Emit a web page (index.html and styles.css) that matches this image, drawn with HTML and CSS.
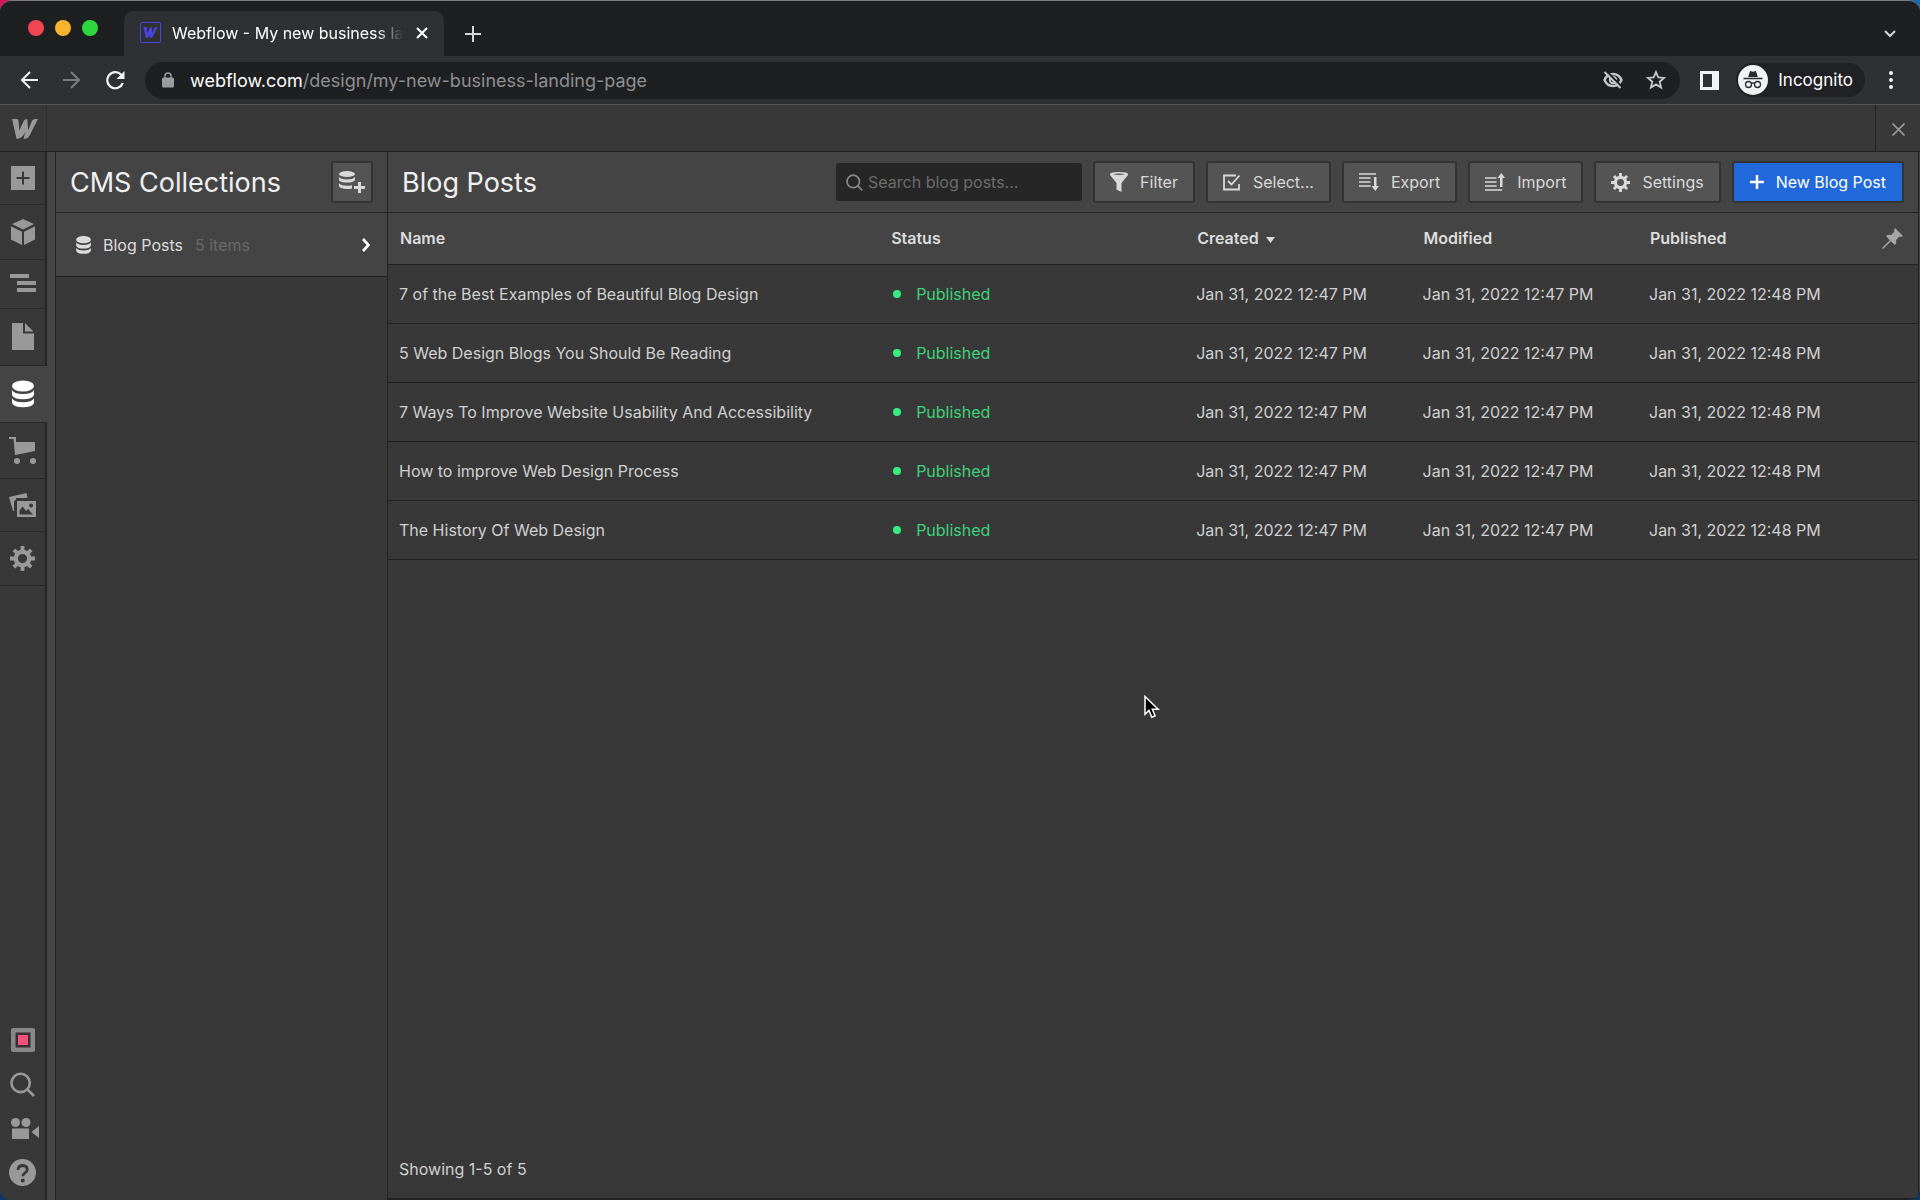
FILE: index.html
```html
<!DOCTYPE html>
<html lang="en">
    <head>
        <title>Webflow - My new business landing page</title>
        <meta charset="UTF-8">
        <link rel="stylesheet" href="styles.css">
    </head>
    <body>
        <!-- shared icons -->
        <svg class="sprite" width="0" height="0">
            <symbol id="database" viewBox="0 0 22 27">
                <ellipse cx="11" cy="5.500" rx="11" ry="5.500"/>
                <path d="M0 9.500q2 4 11 4t11-4v5q-2 4.300-11 4.300T0 14.500z"/>
                <path d="M0 17.800q2 4 11 4t11-4v4.600q-2 4.300-11 4.300T0 22.400z"/>
            </symbol>
            <symbol id="gear" viewBox="0 0 26 26">
                <circle cx="13" cy="13" r="7" fill="none" stroke="currentColor" stroke-width="4.500"/>
                <path d="M13 0v5M13 21v5M0 13h5M21 13h5M4 4l3.500 3.500M18.500 18.500L22 22M22 4l-3.500 3.500M7.500 18.500L4 22" fill="none" stroke="currentColor" stroke-width="4"/>
            </symbol>
            <symbol id="logo" viewBox="0 0 26 20">
                <path d="M26 0l-8.300 16.300c-1.200 2.500-3.300 3.700-6.200 3.700l1.900-7.700C11.500 17 8.900 19.800 4.600 20L.8 3.600C.4 1.200.2.600 0 0h4.700c1 0 1.700.700 1.800 2l.8 9.500 4.200-9.100C12.300.8 13.500 0 15.300 0l.9 11.500 3.300-8.700C20.300.900 21.500 0 23.300 0z"/>
            </symbol>
            <symbol id="search" viewBox="0 0 24 24">
                <path d="M17 17l6 6M19 10.500a8.800 8.800 0 1 1-17.600 0 8.800 8.800 0 0 1 17.600 0z" fill="none" stroke="currentColor" stroke-width="2.500"/>
            </symbol>
        </svg>

        <div class="window">
            <header class="tab-strip">
                <div class="lights">
                    <span class="light red"></span>
                    <span class="light yellow"></span>
                    <span class="light green"></span>
                </div>
                <div class="tab">
                    <span class="favicon"><svg width="15" height="11"><use href="#logo"/></svg></span>
                    <span class="tab-title">Webflow - My new business landing page</span>
                    <button class="icon-button" aria-label="Close tab">
                        <svg width="12" height="12" viewBox="0 0 12 12"><path d="M1 1l10 10M11 1L1 11" stroke="currentColor" stroke-width="2"/></svg>
                    </button>
                </div>
                <button class="icon-button new-tab" aria-label="New tab">
                    <svg width="16" height="16" viewBox="0 0 16 16"><path d="M8 0v16M0 8h16" stroke="currentColor" stroke-width="2"/></svg>
                </button>
                <button class="icon-button tab-menu" aria-label="Search tabs">
                    <svg width="12" height="8" viewBox="0 0 12 8"><path d="M1 1l5 5 5-5" fill="none" stroke="currentColor" stroke-width="2"/></svg>
                </button>
            </header>

            <nav class="toolbar">
                <div class="nav-buttons">
                    <button class="icon-button" aria-label="Back">
                        <svg width="18" height="18" viewBox="0 0 18 18"><path d="M18 9H2M10 1L2 9l8 8" fill="none" stroke="currentColor" stroke-width="2"/></svg>
                    </button>
                    <button class="icon-button dim" aria-label="Forward">
                        <svg width="18" height="18" viewBox="0 0 18 18"><path d="M0 9h16M8 1l8 8-8 8" fill="none" stroke="currentColor" stroke-width="2"/></svg>
                    </button>
                    <button class="icon-button" aria-label="Reload">
                        <svg width="19" height="19" viewBox="0 0 19 19"><path d="M16.800 12a8 8 0 1 1-1.600-8.200" fill="none" stroke="currentColor" stroke-width="2.200"/><path d="M18.500 0v8h-8z"/></svg>
                    </button>
                </div>
                <div class="address">
                    <svg width="12" height="16" viewBox="0 0 12 16"><path d="M3 7V4a3 3 0 0 1 6 0v3" fill="none" stroke="currentColor" stroke-width="1.500"/><rect y="5.500" width="12" height="10" rx="1.500"/></svg>
                    <a class="url" href="#"><span class="host">webflow.com</span>/design/my-new-business-landing-page</a>
                    <button class="icon-button" aria-label="Third-party cookies blocked">
                        <svg width="20" height="18" viewBox="0 0 20 18"><path d="M1.500 9C3.200 5 6.400 3 10 3s6.800 2 8.500 6c-1.700 4-4.900 6-8.500 6s-6.800-2-8.500-6z" fill="none" stroke="currentColor" stroke-width="2.400"/><circle cx="10" cy="9" r="3.200" fill="none" stroke="currentColor" stroke-width="2"/><path d="M3.500 0l15 15.500" stroke="#1e1f21" stroke-width="2"/><path d="M1.500 1l16 16" stroke="currentColor" stroke-width="2"/></svg>
                    </button>
                    <button class="icon-button" aria-label="Bookmark">
                        <svg width="20" height="20" viewBox="0 0 20 20"><path d="M10 2l2.300 5.400 5.900.5-4.500 3.800 1.400 5.800-5.100-3.100-5.100 3.100 1.400-5.800-4.500-3.800 5.900-.5z" fill="none" stroke="currentColor" stroke-width="1.800"/></svg>
                    </button>
                </div>
                <button class="icon-button" aria-label="Side panel">
                    <svg width="19" height="19" viewBox="0 0 19 19"><path d="M0 0h19v19H0zM3 3v13h9V3z" fill-rule="evenodd"/></svg>
                </button>
                <button class="incognito">
                    <svg width="30" height="30" viewBox="0 0 30 30"><circle cx="15" cy="15" r="15" fill="#f1f3f4"/><path d="M10.200 12l1.600-5.200q.4-1 1.400-.6l1.800.5 1.800-.5q1-.4 1.400.6l1.600 5.200zM5.500 12.800h19v1.400h-19z" fill="#2a2b2e"/><path d="M13.500 18.500q1.500-1 3 0" fill="none" stroke="#2a2b2e" stroke-width="1.300"/><circle cx="10.500" cy="19.500" r="3" fill="none" stroke="#2a2b2e" stroke-width="1.300"/><circle cx="19.500" cy="19.500" r="3" fill="none" stroke="#2a2b2e" stroke-width="1.300"/></svg>
                    Incognito
                </button>
                <button class="icon-button browser-menu" aria-label="Menu">
                    <svg width="4" height="18" viewBox="0 0 4 18"><circle cx="2" cy="2" r="2"/><circle cx="2" cy="9" r="2"/><circle cx="2" cy="16" r="2"/></svg>
                </button>
            </nav>

            <div class="designer-bar">
                <a class="brand" href="#" aria-label="Webflow"><svg width="26" height="20"><use href="#logo"/></svg></a>
                <button class="close-panel" aria-label="Close">
                    <svg width="13" height="13" viewBox="0 0 13 13"><path d="M.5.5l12 12M12.500.5l-12 12" stroke="currentColor" stroke-width="1.600"/></svg>
                </button>
            </div>

            <div class="workspace">
                <aside class="rail">
                    <button class="rail-item" aria-label="Add">
                        <svg width="24" height="24" viewBox="0 0 24 24"><path d="M0 0h24v24H0zM11 5.500V11H5.500v2H11v5.500h2V13h5.500v-2H13V5.500z" fill-rule="evenodd"/></svg>
                    </button>
                    <button class="rail-item" aria-label="Symbols">
                        <svg width="24" height="26" viewBox="0 0 24 26"><path d="M12 0l11 5-11 5.500L1 5zM0 7.200l11 5.500V26L0 20.500zM24 7.200l-11 5.500V26l11-5.500z"/></svg>
                    </button>
                    <button class="rail-item" aria-label="Navigator">
                        <svg width="26" height="20" viewBox="0 0 26 20"><path d="M0 0h19v4H0zM7 7h19v4H7zM7 14h19v4H7z"/></svg>
                    </button>
                    <button class="rail-item" aria-label="Pages">
                        <svg width="22" height="28" viewBox="0 0 22 28"><path d="M0 0h11v10.500h11V27H0zM13 0l8.500 8.500H13z"/></svg>
                    </button>
                    <button class="rail-item active" aria-label="CMS">
                        <svg width="22" height="28"><use href="#database"/></svg>
                    </button>
                    <button class="rail-item" aria-label="Ecommerce">
                        <svg width="27" height="27" viewBox="0 0 27 27"><path d="M0 0h7v5h19v9L6 18 4.500 2H0z"/><circle cx="8" cy="24" r="3"/><circle cx="24" cy="24" r="3"/></svg>
                    </button>
                    <button class="rail-item" aria-label="Assets">
                        <svg width="27" height="24" viewBox="0 0 27 24"><path d="M0 4L17.500 0l1 5H7v2q-2 0-2 2v9H4z"/><path d="M8 8h19v16H8zM10.500 21.500h13.500L19 16l-2 2-3.500-4.500-3 4zM22 10.500a2 2 0 1 0 .1 0z" fill-rule="evenodd"/></svg>
                    </button>
                    <button class="rail-item" aria-label="Settings">
                        <svg width="25" height="25"><use href="#gear"/></svg>
                    </button>
                    <div class="rail-bottom">
                        <button class="rail-tool" aria-label="Audit">
                            <svg width="24" height="24" viewBox="0 0 24 24"><rect width="24" height="24" rx="2" fill="#888"/><path d="M4.500 4.500h15v15h-15z" fill="#3a3033"/><path d="M7 7h10v10H7z" fill="#f0527c"/></svg>
                        </button>
                        <button class="rail-tool" aria-label="Search">
                            <svg width="25" height="25"><use href="#search"/></svg>
                        </button>
                        <button class="rail-tool video" aria-label="Video tutorials">
                            <svg width="28" height="21" viewBox="0 0 28 21"><circle cx="4.500" cy="4.500" r="4.500"/><circle cx="15" cy="4.500" r="4.500"/><path d="M1 10.500h17V21H1zM28 8v12l-7-5.500v-1z"/></svg>
                        </button>
                        <button class="rail-tool" aria-label="Help">
                            <svg width="27" height="27" viewBox="0 0 27 27"><circle cx="13.500" cy="13.500" r="13.500"/><path d="M9 10.800q.3-4.300 4.700-4.300 4.500.1 4.500 3.900 0 2.200-2.400 3.700-2 1.200-2 3.200" fill="none" stroke="#383838" stroke-width="2.800"/><circle cx="13.700" cy="21.400" r="2" fill="#383838"/></svg>
                        </button>
                    </div>
                </aside>

                <section class="collections">
                    <div class="panel-head">
                        <h1>CMS Collections</h1>
                        <button class="button square" aria-label="New collection">
                            <svg width="26" height="22" viewBox="0 0 26 22"><ellipse cx="8" cy="3" rx="8" ry="3"/><path d="M0 6q2 2.500 8 2.500T16 6v3.200q-2 2.300-8 2.300T0 9.200zM0 12.200q2 2.500 8 2.500 3 0 5-.5v3.200q-2 .5-5 .5-6 0-8-2.300zM19 11h3v4h4v3h-4v4h-3v-4h-4v-3h4z"/></svg>
                        </button>
                    </div>
                    <a class="collection" href="#">
                        <svg width="15" height="18"><use href="#database"/></svg>
                        <span>Blog Posts</span>
                        <span class="count">5 items</span>
                        <svg class="chevron" width="8" height="14" viewBox="0 0 8 14"><path d="M1 1l5.500 6L1 13" fill="none" stroke="currentColor" stroke-width="2.600"/></svg>
                    </a>
                </section>

                <main class="content">
                    <div class="panel-head">
                        <h2>Blog Posts</h2>
                        <div class="actions">
                            <label class="search">
                                <svg width="17" height="17"><use href="#search"/></svg>
                                <input type="search" placeholder="Search blog posts..." aria-label="Search blog posts">
                            </label>
                            <button class="button">
                                <svg width="18" height="20" viewBox="0 0 18 20"><path d="M0 2q0-2 9-2t9 2v1l-6.500 8v9l-5-2.500V11L0 3zM3 2.200q6 1.600 12 0-6-1.200-12 0z" fill-rule="evenodd"/></svg>
                                Filter
                            </button>
                            <button class="button">
                                <svg width="18" height="17" viewBox="0 0 18 17"><path d="M13 1.500H1v14h15V10M5 7l3.500 3.500 8-9" fill="none" stroke="currentColor" stroke-width="1.800"/></svg>
                                Select...
                            </button>
                            <button class="button">
                                <svg width="20" height="18" viewBox="0 0 20 18"><path d="M0 1h17M0 5h11.500M0 9h11.500M0 13h11.500" stroke="currentColor" stroke-width="1.700"/><path d="M15 4h2.500v9H20l-3.700 5-3.800-5H15z"/></svg>
                                Export
                            </button>
                            <button class="button">
                                <svg width="20" height="18" viewBox="0 0 20 18"><path d="M0 5h11.500M0 9h11.500M0 13h11.500M0 17h17" stroke="currentColor" stroke-width="1.700"/><path d="M15 14h2.500V5H20l-3.700-5-3.800 5H15z"/></svg>
                                Import
                            </button>
                            <button class="button">
                                <svg width="19" height="19"><use href="#gear"/></svg>
                                Settings
                            </button>
                            <button class="button primary">
                                <svg width="14" height="14" viewBox="0 0 14 14"><path d="M7 0v14M0 7h14" stroke="currentColor" stroke-width="2.500"/></svg>
                                New Blog Post
                            </button>
                        </div>
                    </div>
                    <table class="posts">
                        <colgroup>
                            <col class="col-name">
                            <col class="col-status">
                            <col class="col-date">
                            <col class="col-date">
                            <col class="col-date">
                            <col>
                        </colgroup>
                        <thead>
                            <tr>
                                <th>Name</th>
                                <th>Status</th>
                                <th>Created <svg class="sort" width="9" height="6" viewBox="0 0 9 6"><path d="M0 0h9L4.500 6z"/></svg></th>
                                <th>Modified</th>
                                <th>Published</th>
                                <th class="pin">
                                    <button class="icon-button" aria-label="Pin columns">
                                        <svg width="21" height="21" viewBox="0 0 21 21"><path d="M13 0l8 8-2 1-1.500-.5-3.500 3.500q1 3-1 5L8.800 13.200 1.500 20.500 0 21l.5-1.500 7.300-7.300L4 8q2-2 5-1l3.500-3.500L12 2z"/></svg>
                                    </button>
                                </th>
                            </tr>
                        </thead>
                        <tbody>
                            <tr>
                                <td>7 of the Best Examples of Beautiful Blog Design</td>
                                <td><span class="status">Published</span></td>
                                <td>Jan 31, 2022 12:47 PM</td>
                                <td>Jan 31, 2022 12:47 PM</td>
                                <td>Jan 31, 2022 12:48 PM</td>
                                <td></td>
                            </tr>
                            <tr>
                                <td>5 Web Design Blogs You Should Be Reading</td>
                                <td><span class="status">Published</span></td>
                                <td>Jan 31, 2022 12:47 PM</td>
                                <td>Jan 31, 2022 12:47 PM</td>
                                <td>Jan 31, 2022 12:48 PM</td>
                                <td></td>
                            </tr>
                            <tr>
                                <td>7 Ways To Improve Website Usability And Accessibility</td>
                                <td><span class="status">Published</span></td>
                                <td>Jan 31, 2022 12:47 PM</td>
                                <td>Jan 31, 2022 12:47 PM</td>
                                <td>Jan 31, 2022 12:48 PM</td>
                                <td></td>
                            </tr>
                            <tr>
                                <td>How to improve Web Design Process</td>
                                <td><span class="status">Published</span></td>
                                <td>Jan 31, 2022 12:47 PM</td>
                                <td>Jan 31, 2022 12:47 PM</td>
                                <td>Jan 31, 2022 12:48 PM</td>
                                <td></td>
                            </tr>
                            <tr>
                                <td>The History Of Web Design</td>
                                <td><span class="status">Published</span></td>
                                <td>Jan 31, 2022 12:47 PM</td>
                                <td>Jan 31, 2022 12:47 PM</td>
                                <td>Jan 31, 2022 12:48 PM</td>
                                <td></td>
                            </tr>
                        </tbody>
                    </table>
                    <p class="summary">Showing 1-5 of 5</p>
                </main>
            </div>
        </div>

        <svg class="cursor" width="16" height="24" viewBox="0 0 16 24"><path d="M1 1.500v17.700l4-3.800 2.800 6.800 3.300-1.400-2.800-6.500h5.900z" fill="#000" stroke="#fff" stroke-width="1.500"/></svg>
    </body>
</html>
```
FILE: styles.css
```css
* {
    margin: 0;
    padding: 0;
    box-sizing: border-box;
}
body {
    font-family: Inter, "Liberation Sans", sans-serif;
    font-size: 16px;
    color: #d0d0d0;
    background: radial-gradient(circle at 0 0, #d4145a 20px, transparent 40px),
        radial-gradient(circle at 100% 0, #1b6cab 20px, transparent 40px),
        #0d3763;
}
button, input {
    font: inherit;
    color: inherit;
    background: none;
    border: none;
}
a {
    color: inherit;
    text-decoration: none;
}
svg {
    display: block;
    flex-shrink: 0;
    fill: currentColor;
}
.sprite {
    position: absolute;
}
.window {
    display: flex;
    flex-direction: column;
    height: 100vh;
    overflow: hidden;
    border-top: 1px solid #7d7e80;
    border-radius: 12px;
    background-color: #383838;
}

/* browser */
.tab-strip {
    display: flex;
    align-items: flex-end;
    height: 55px;
    padding: 0 22px 0 28px;
    background-color: #1e1f21;
}
.lights {
    display: flex;
    gap: 11px;
    height: 35px;
    margin-right: 26px;
    align-self: flex-start;
    align-items: flex-end;
}
.light {
    width: 16px;
    height: 16px;
    border-radius: 50%;
}
.red {
    background-color: #f14553;
}
.yellow {
    background-color: #f7b52e;
}
.green {
    background-color: #2cd83c;
}
.tab {
    display: flex;
    align-items: center;
    width: 320px;
    height: 45px;
    padding: 0 16px 2px;
    border-radius: 10px 10px 0 0;
    background-color: #2f3034;
    color: #fff;
}
.favicon {
    display: flex;
    align-items: center;
    justify-content: center;
    width: 21px;
    height: 21px;
    margin-right: 11px;
    border: 1px solid #4a43e0;
    border-radius: 2px;
    color: #4a43e0;
}
.tab-title {
    flex: 1;
    margin-right: 13px;
    overflow: hidden;
    white-space: nowrap;
    -webkit-mask-image: linear-gradient(90deg, #000 88%, transparent);
    mask-image: linear-gradient(90deg, #000 88%, transparent);
}
.icon-button {
    display: flex;
    align-items: center;
    justify-content: center;
}
.new-tab {
    height: 45px;
    margin-left: 21px;
    color: #d5d6d8;
}
.tab-menu {
    height: 45px;
    margin-left: auto;
    margin-right: 2px;
    color: #d5d6d8;
}
.toolbar {
    display: flex;
    align-items: center;
    height: 49px;
    padding: 0 27px 0 20px;
    border-bottom: 1px solid #555557;
    background-color: #2f3034;
    color: #f1f3f4;
}
.nav-buttons {
    display: flex;
    gap: 25px;
    margin-right: 20px;
}
.dim {
    color: #7c7d80;
}
.address {
    display: flex;
    flex: 1;
    align-items: center;
    gap: 23px;
    height: 37px;
    margin-right: 20px;
    padding: 0 14px 0 17px;
    border-radius: 19px;
    background-color: #1e1f21;
    color: #9a9b9e;
}
.url {
    flex: 1;
    margin-left: -7px;
    font-size: 18px;
    color: #8e8f92;
}
.host {
    color: #fff;
}
.address .icon-button {
    color: #c5c6c8;
}
.incognito {
    display: flex;
    align-items: center;
    gap: 10px;
    height: 34px;
    margin-left: 17px;
    padding: 0 12px 0 2px;
    border-radius: 17px;
    background-color: #202124;
    font-size: 17px;
    color: #fff;
}
.browser-menu {
    margin-left: 24px;
}

/* designer */
.designer-bar {
    display: flex;
    justify-content: space-between;
    height: 47px;
    border-bottom: 1px solid #222;
    background-color: #383838;
    color: #999;
}
.brand {
    display: flex;
    align-items: center;
    width: 47px;
    padding: 2px 0 0 12px;
    border-right: 1px solid #303030;
}
.close-panel {
    display: flex;
    align-items: center;
    justify-content: center;
    width: 45px;
    padding-top: 2px;
    border-left: 1px solid #222;
}
.workspace {
    display: flex;
    flex: 1;
    min-height: 0;
    padding-right: 1px;
    background-color: #444;
}
.rail {
    display: flex;
    flex-direction: column;
    width: 47px;
    margin-right: 8px;
}
.rail-item {
    display: flex;
    justify-content: center;
    padding: 14px 0;
    border-right: 2px solid #262626;
    border-bottom: 1px solid #2a2a2a;
    background-color: #383838;
    color: #999;
}
.rail-item.active {
    border-right-color: transparent;
    background-color: #444;
    color: #fff;
}
.rail-bottom {
    display: flex;
    flex: 1;
    flex-direction: column;
    justify-content: flex-end;
    padding-bottom: 6px;
    border-right: 2px solid #262626;
    background-color: #383838;
    color: #999;
}
.rail-tool {
    display: flex;
    align-items: center;
    justify-content: center;
    height: 44px;
}
.rail-tool.video {
    padding-left: 4px;
}
.collections {
    width: 332px;
    border-left: 1px solid #222;
    background-color: #383838;
}
.panel-head {
    display: flex;
    align-items: center;
    justify-content: space-between;
    height: 61px;
    padding: 0 14px;
    border-bottom: 1px solid #222;
    background-color: #444;
}
h1, h2 {
    font-size: 27px;
    font-weight: 400;
    color: #f0f0f0;
}
.button {
    display: flex;
    align-items: center;
    gap: 12px;
    height: 42px;
    padding: 0 15px;
    border: 2px solid #333;
    border-radius: 3px;
    background-color: #545454;
    color: #d9d9d9;
    white-space: nowrap;
}
.button.square {
    justify-content: center;
    width: 42px;
    padding: 0;
}
.button.primary {
    padding: 0 16px;
    background-color: #2168da;
    color: #fff;
}
.collection {
    display: flex;
    align-items: center;
    height: 64px;
    padding: 0 17px 0 20px;
    border-bottom: 1px solid #222;
    background-color: #444;
    color: #dcdcdc;
}
.collection span {
    margin-left: 12px;
}
.collection .count {
    color: #6a6a6a;
}
.chevron {
    margin-left: auto;
    color: #fff;
}
.content {
    display: flex;
    flex: 1;
    flex-direction: column;
    border-left: 1px solid #222;
    border-right: 1px solid #222;
    border-bottom: 2px solid #222;
    background-color: #383838;
}
.actions {
    display: flex;
    align-items: center;
    gap: 11px;
}
.search {
    display: flex;
    align-items: center;
    gap: 5px;
    width: 246px;
    height: 38px;
    padding: 0 10px;
    border-radius: 3px;
    background-color: #262626;
    color: #858585;
}
.search input {
    width: 100%;
    outline: none;
}
.search input::placeholder {
    color: #6c6c6c;
}
.posts {
    width: 100%;
    table-layout: fixed;
    border-collapse: collapse;
}
.col-name {
    width: 32.1%;
}
.col-status {
    width: 20%;
}
.col-date {
    width: 14.8%;
}
.posts th {
    height: 51px;
    padding: 0 12px;
    border-bottom: 1px solid #222;
    background-color: #444;
    font-weight: 600;
    text-align: left;
    color: #dcdcdc;
}
.posts td {
    height: 59px;
    padding: 0 11px;
    border-bottom: 1px solid #222;
}
.sort {
    display: inline-block;
    margin-left: 3px;
    vertical-align: middle;
}
.posts .pin {
    padding-right: 15px;
}
.pin .icon-button {
    margin-left: auto;
    color: #a5a5a5;
}
.status {
    display: flex;
    align-items: center;
    gap: 15px;
    padding-left: 3px;
    color: #3ed17a;
}
.status::before {
    content: "";
    width: 8px;
    height: 8px;
    border-radius: 50%;
    background-color: #35ee80;
}
.summary {
    margin-top: auto;
    padding: 0 11px 19px;
}

/* pointer lies over the page */
.cursor {
    position: absolute;
    left: 1144px;
    top: 695px;
}
```
